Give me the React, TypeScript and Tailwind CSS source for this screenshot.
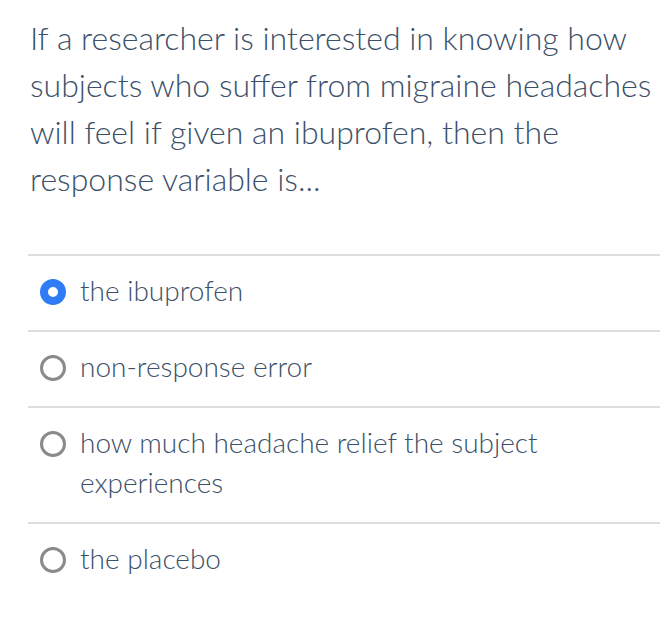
const options = [
  { id: "a", label: "the ibuprofen", selected: true },
  { id: "b", label: "non-response error", selected: false },
  { id: "c", label: "how much headache relief the subject experiences", selected: false },
  { id: "d", label: "the placebo", selected: false },
];

function Radio({ selected }: { selected: boolean }) {
  if (selected) {
    return (
      <span className="mt-[9px] block w-[26px] h-[26px] rounded-full border-[8px] border-[#2f7cf6] bg-white shrink-0" />
    );
  }
  return (
    <span className="mt-[9px] block w-[26px] h-[26px] rounded-full border-[3px] border-[#8a8a8a] bg-white shrink-0" />
  );
}

export default function App() {
  return (
    <div
      className="w-[668px] h-[635px] bg-white text-[#3b5069] font-light pl-[28px] pr-[8px] pt-[14px]"
      style={{ fontFamily: "Lato, 'Noto Sans', sans-serif" }}
    >
      <p className="pl-[2px] text-[32px] leading-[47px]">
        If a researcher is interested in knowing how subjects who suffer from migraine headaches
        will feel if given an ibuprofen, then the response variable is...
      </p>
      <div className="mt-[52px]">
        {options.map((o) => (
          <div key={o.id} className="flex gap-[14px] border-t-2 border-[#dddddd] pl-[12px] pt-[14px] pb-[20px]">
            <Radio selected={o.selected} />
            <span className="text-[28px] leading-[40px] pr-[100px]">{o.label}</span>
          </div>
        ))}
      </div>
    </div>
  );
}
